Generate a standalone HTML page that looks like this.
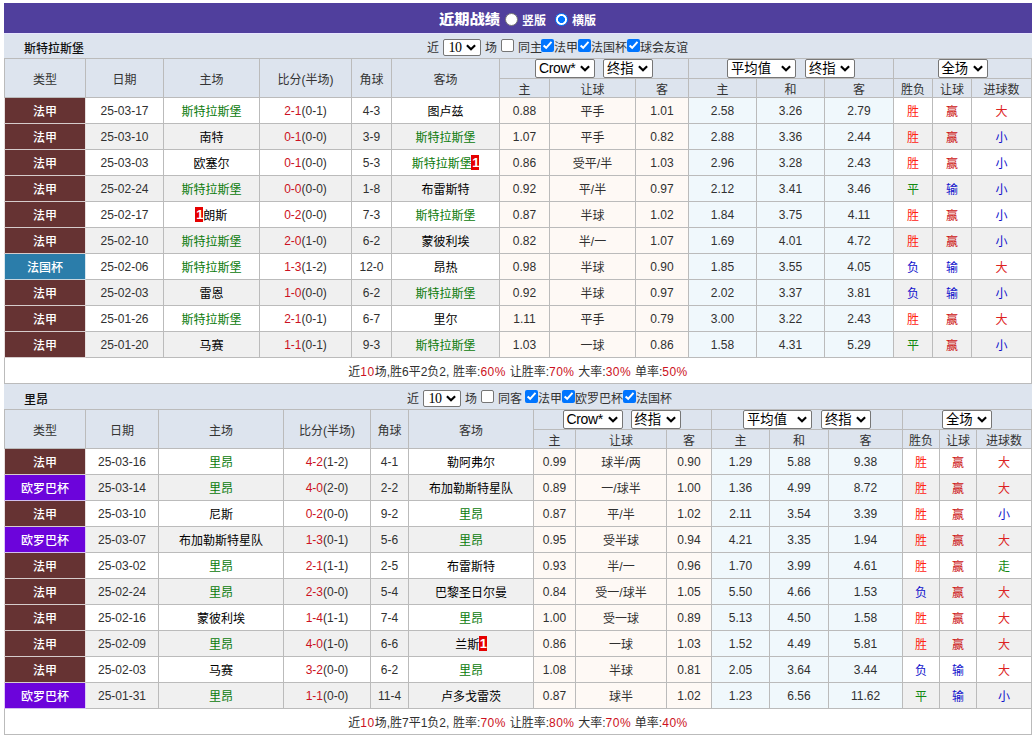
<!DOCTYPE html>
<html lang="zh-CN">
<head>
<meta charset="utf-8">
<title>近期战绩</title>
<style>
html,body{margin:0;padding:0;background:#fff;}
body{font-family:"Liberation Sans","Noto Sans CJK SC",sans-serif;font-size:12px;color:#303030;}
#wrap{position:absolute;left:4px;top:3px;width:1028px;}
.title{height:30px;background:#503F9D;color:#fff;position:relative;}
.title>*{position:absolute;}
.tt{left:435px;top:6px;font-size:14px;line-height:20px;font-weight:900;transform-origin:0 50%;transform:scaleX(1.09);}
.rd{box-sizing:border-box;width:13px;height:13px;top:10px;border-radius:50%;background:#fff;border:1px solid #767676;}
.rd.on{border:1px solid #0075FF;background:radial-gradient(circle at center,#0075FF 0,#0075FF 3.2px,#fff 3.8px);}
.rl{top:10px;font-size:12px;line-height:16px;font-weight:700;}
.bar{height:24px;border-top:1px solid #E6E4FF;background:#DDE4EE;position:relative;}
.bar.b2{border-top-color:#DDE4EE;}
.bar>*{position:absolute;}
.tn{left:20px;top:7px;line-height:16px;font-weight:500;color:#111;}
.bt{top:6px;line-height:16px;color:#333;}
.sel{display:inline-block;box-sizing:border-box;height:19px;border:1px solid #767676;border-radius:2px;background:#fff;position:relative;color:#000;vertical-align:top;font-weight:normal;text-align:left;}
.sel .st{position:absolute;left:3px;top:0;font-size:13.33px;line-height:17px;}
.sel .ar{position:absolute;right:4px;top:5px;}
.bar .sel{position:absolute;top:5px;height:17px;}
.bar .sel .st{font-family:"Liberation Serif","Noto Sans CJK SC",serif;font-size:14px;line-height:15px;left:4.5px;letter-spacing:-0.6px;}
.bar .sel .ar{top:4px;}
.cb{box-sizing:border-box;width:13px;height:13px;top:5px;border:1px solid #767676;border-radius:2px;background:#fff;}
.cb.on{border:none;background:#0075FF;}
.cb svg{display:block}
table.t{border-collapse:collapse;table-layout:fixed;width:1028px;}
table.t th,table.t td{border:1px solid #BBB;padding:0;text-align:center;font-weight:normal;overflow:hidden;white-space:nowrap;}
thead th{background:#DDE4EE;color:#333;}
tr.h1 th{height:19px;}
tr.h1 th.sc3{font-size:0;line-height:0;vertical-align:top;}
tr.h2 th{height:18px;}
tbody td{height:25px;background:#fff;}
tr.alt td{background:#F0F0F0;}
table.t td.ty{color:#fff;font-weight:500;border-left-color:#E6DEDE;border-right-color:#E6DEDE;border-bottom-color:#D6CCCC;}
table.t td.ty.tb{border-left-color:#D8E6EE;border-right-color:#D8E6EE;border-bottom-color:#C8D6DE;}
table.t td.ty.tp{border-left-color:#DFC8F8;border-right-color:#DFC8F8;border-bottom-color:#D2BEEE;}
td.oa,tr.alt td.oa{background:#FEF9F5;}
td.ob,tr.alt td.ob{background:#F0F8FC;}
.me{color:#0A7A0A;}
.nm{color:#000;}
.sc{color:#CC1122;}
.rc{background:#E60000;color:#fff;font-weight:bold;font-size:13px;position:relative;top:-1px;padding-left:1px;margin-left:-0.5px;}
.r1{color:#F21}.r2{color:#C11}.r3{color:#D22}.g1{color:#181}.b1{color:#11C}
tr.ft td{background:#fff;height:25px;word-spacing:0.4px;}
tr.ft i{font-style:normal;color:#CC1122;letter-spacing:0.5px;}
.gap{display:inline-block;width:8px}.gap2{display:inline-block;width:9px}

table.t2 tr.h1 th.sc3:nth-child(7){padding-right:2px;}
.sel .lat{font-size:14px;letter-spacing:-0.35px;}

</style>
</head>
<body>
<div id="wrap">
<div class="title"><b class="tt">近期战绩</b><span class="rd" style="left:501px"></span><span class="rl" style="left:518px">竖版</span><span class="rd on" style="left:551px"></span><span class="rl" style="left:568px">横版</span></div>
<div class="bar"><span class="tn">斯特拉斯堡</span><span class="bt" style="left:423px">近</span><span class="sel s10" style="width:38px;left:439px"><span class="st">10</span><svg class="ar" viewBox="0 0 10 7" width="10" height="7"><path d="M0.9 1.3 L5 5.2 L9.1 1.3" fill="none" stroke="#000" stroke-width="2.2" stroke-linecap="butt" stroke-linejoin="miter"/></svg></span><span class="bt" style="left:481px">场</span><span class="cb" style="left:497px"></span><span class="bt" style="left:514px">同主</span><span class="cb on" style="left:537px"><svg viewBox="0 0 13 13" width="13" height="13"><path d="M2.6 6.4 L5.2 8.8 L10.5 2.9" fill="none" stroke="#fff" stroke-width="2" stroke-linecap="butt" stroke-linejoin="miter"/></svg></span><span class="bt" style="left:550px">法甲</span><span class="cb on" style="left:574px"><svg viewBox="0 0 13 13" width="13" height="13"><path d="M2.6 6.4 L5.2 8.8 L10.5 2.9" fill="none" stroke="#fff" stroke-width="2" stroke-linecap="butt" stroke-linejoin="miter"/></svg></span><span class="bt" style="left:587px">法国杯</span><span class="cb on" style="left:623px"><svg viewBox="0 0 13 13" width="13" height="13"><path d="M2.6 6.4 L5.2 8.8 L10.5 2.9" fill="none" stroke="#fff" stroke-width="2" stroke-linecap="butt" stroke-linejoin="miter"/></svg></span><span class="bt" style="left:636px">球会友谊</span></div>
<table class="t t1"><colgroup><col style="width:81px"><col style="width:78px"><col style="width:96px"><col style="width:92px"><col style="width:40px"><col style="width:108px"><col style="width:50px"><col style="width:86px"><col style="width:53px"><col style="width:68px"><col style="width:68px"><col style="width:69px"><col style="width:39px"><col style="width:39px"><col style="width:60px"></colgroup>
<thead><tr class="h1"><th rowspan="2">类型</th><th rowspan="2">日期</th><th rowspan="2">主场</th><th rowspan="2">比分(半场)</th><th rowspan="2">角球</th><th rowspan="2">客场</th><th colspan="3" class="sc3"><span class="sel " style="width:60px;"><span class="st"><span class="lat">Crow*</span></span><svg class="ar" viewBox="0 0 10 7" width="10" height="7"><path d="M0.9 1.3 L5 5.2 L9.1 1.3" fill="none" stroke="#000" stroke-width="2.2" stroke-linecap="butt" stroke-linejoin="miter"/></svg></span><span class="gap"></span><span class="sel " style="width:50px;"><span class="st">终指</span><svg class="ar" viewBox="0 0 10 7" width="10" height="7"><path d="M0.9 1.3 L5 5.2 L9.1 1.3" fill="none" stroke="#000" stroke-width="2.2" stroke-linecap="butt" stroke-linejoin="miter"/></svg></span></th><th colspan="3" class="sc3"><span class="sel wide" style="width:69px;"><span class="st">平均值</span><svg class="ar" viewBox="0 0 10 7" width="10" height="7"><path d="M0.9 1.3 L5 5.2 L9.1 1.3" fill="none" stroke="#000" stroke-width="2.2" stroke-linecap="butt" stroke-linejoin="miter"/></svg></span><span class="gap2"></span><span class="sel " style="width:50px;"><span class="st">终指</span><svg class="ar" viewBox="0 0 10 7" width="10" height="7"><path d="M0.9 1.3 L5 5.2 L9.1 1.3" fill="none" stroke="#000" stroke-width="2.2" stroke-linecap="butt" stroke-linejoin="miter"/></svg></span></th><th colspan="3" class="sc3"><span class="sel " style="width:50px;"><span class="st">全场</span><svg class="ar" viewBox="0 0 10 7" width="10" height="7"><path d="M0.9 1.3 L5 5.2 L9.1 1.3" fill="none" stroke="#000" stroke-width="2.2" stroke-linecap="butt" stroke-linejoin="miter"/></svg></span></th></tr><tr class="h2"><th>主</th><th>让球</th><th>客</th><th>主</th><th>和</th><th>客</th><th>胜负</th><th>让球</th><th>进球数</th></tr></thead>
<tbody>
<tr><td class="ty" style="background:#663333">法甲</td><td>25-03-17</td><td><span class="me">斯特拉斯堡</span></td><td><span class="sc">2-1</span>(0-1)</td><td>4-3</td><td><span class="nm">图卢兹</span></td><td class="oa">0.88</td><td class="oa">平手</td><td class="oa">1.01</td><td class="ob">2.58</td><td class="ob">3.26</td><td class="ob">2.79</td><td class="r1">胜</td><td class="r2">赢</td><td class="r3">大</td></tr>
<tr class="alt"><td class="ty" style="background:#663333">法甲</td><td>25-03-10</td><td><span class="nm">南特</span></td><td><span class="sc">0-1</span>(0-0)</td><td>3-9</td><td><span class="me">斯特拉斯堡</span></td><td class="oa">1.07</td><td class="oa">平手</td><td class="oa">0.82</td><td class="ob">2.88</td><td class="ob">3.36</td><td class="ob">2.44</td><td class="r1">胜</td><td class="r2">赢</td><td class="b1">小</td></tr>
<tr><td class="ty" style="background:#663333">法甲</td><td>25-03-03</td><td><span class="nm">欧塞尔</span></td><td><span class="sc">0-1</span>(0-0)</td><td>5-3</td><td><span class="me">斯特拉斯堡</span><span class="rc">1</span></td><td class="oa">0.86</td><td class="oa">受平/半</td><td class="oa">1.03</td><td class="ob">2.96</td><td class="ob">3.28</td><td class="ob">2.43</td><td class="r1">胜</td><td class="r2">赢</td><td class="b1">小</td></tr>
<tr class="alt"><td class="ty" style="background:#663333">法甲</td><td>25-02-24</td><td><span class="me">斯特拉斯堡</span></td><td><span class="sc">0-0</span>(0-0)</td><td>1-8</td><td><span class="nm">布雷斯特</span></td><td class="oa">0.92</td><td class="oa">平/半</td><td class="oa">0.97</td><td class="ob">2.12</td><td class="ob">3.41</td><td class="ob">3.46</td><td class="g1">平</td><td class="b1">输</td><td class="b1">小</td></tr>
<tr><td class="ty" style="background:#663333">法甲</td><td>25-02-17</td><td><span class="rc">1</span><span class="nm">朗斯</span></td><td><span class="sc">0-2</span>(0-0)</td><td>7-3</td><td><span class="me">斯特拉斯堡</span></td><td class="oa">0.87</td><td class="oa">半球</td><td class="oa">1.02</td><td class="ob">1.84</td><td class="ob">3.75</td><td class="ob">4.11</td><td class="r1">胜</td><td class="r2">赢</td><td class="b1">小</td></tr>
<tr class="alt"><td class="ty" style="background:#663333">法甲</td><td>25-02-10</td><td><span class="me">斯特拉斯堡</span></td><td><span class="sc">2-0</span>(1-0)</td><td>6-2</td><td><span class="nm">蒙彼利埃</span></td><td class="oa">0.82</td><td class="oa">半/一</td><td class="oa">1.07</td><td class="ob">1.69</td><td class="ob">4.01</td><td class="ob">4.72</td><td class="r1">胜</td><td class="r2">赢</td><td class="b1">小</td></tr>
<tr><td class="ty tb" style="background:#2B7DAA">法国杯</td><td>25-02-06</td><td><span class="me">斯特拉斯堡</span></td><td><span class="sc">1-3</span>(1-2)</td><td>12-0</td><td><span class="nm">昂热</span></td><td class="oa">0.98</td><td class="oa">半球</td><td class="oa">0.90</td><td class="ob">1.85</td><td class="ob">3.55</td><td class="ob">4.05</td><td class="b1">负</td><td class="b1">输</td><td class="r3">大</td></tr>
<tr class="alt"><td class="ty" style="background:#663333">法甲</td><td>25-02-03</td><td><span class="nm">雷恩</span></td><td><span class="sc">1-0</span>(0-0)</td><td>6-2</td><td><span class="me">斯特拉斯堡</span></td><td class="oa">0.92</td><td class="oa">半球</td><td class="oa">0.97</td><td class="ob">2.02</td><td class="ob">3.37</td><td class="ob">3.81</td><td class="b1">负</td><td class="b1">输</td><td class="b1">小</td></tr>
<tr><td class="ty" style="background:#663333">法甲</td><td>25-01-26</td><td><span class="me">斯特拉斯堡</span></td><td><span class="sc">2-1</span>(0-1)</td><td>6-7</td><td><span class="nm">里尔</span></td><td class="oa">1.11</td><td class="oa">平手</td><td class="oa">0.79</td><td class="ob">3.00</td><td class="ob">3.22</td><td class="ob">2.43</td><td class="r1">胜</td><td class="r2">赢</td><td class="r3">大</td></tr>
<tr class="alt"><td class="ty" style="background:#663333">法甲</td><td>25-01-20</td><td><span class="nm">马赛</span></td><td><span class="sc">1-1</span>(0-1)</td><td>9-3</td><td><span class="me">斯特拉斯堡</span></td><td class="oa">1.03</td><td class="oa">一球</td><td class="oa">0.86</td><td class="ob">1.58</td><td class="ob">4.31</td><td class="ob">5.29</td><td class="g1">平</td><td class="r2">赢</td><td class="b1">小</td></tr>
<tr class="ft"><td colspan="15">近<i>10</i>场,胜6平2负2, 胜率:<i>60%</i> 让胜率:<i>70%</i> 大率:<i>30%</i> 单率:<i>50%</i></td></tr>
</tbody></table>
<div class="bar b2"><span class="tn">里昂</span><span class="bt" style="left:403px">近</span><span class="sel s10" style="width:38px;left:419px"><span class="st">10</span><svg class="ar" viewBox="0 0 10 7" width="10" height="7"><path d="M0.9 1.3 L5 5.2 L9.1 1.3" fill="none" stroke="#000" stroke-width="2.2" stroke-linecap="butt" stroke-linejoin="miter"/></svg></span><span class="bt" style="left:461px">场</span><span class="cb" style="left:477px"></span><span class="bt" style="left:494px">同客</span><span class="cb on" style="left:521px"><svg viewBox="0 0 13 13" width="13" height="13"><path d="M2.6 6.4 L5.2 8.8 L10.5 2.9" fill="none" stroke="#fff" stroke-width="2" stroke-linecap="butt" stroke-linejoin="miter"/></svg></span><span class="bt" style="left:534px">法甲</span><span class="cb on" style="left:558px"><svg viewBox="0 0 13 13" width="13" height="13"><path d="M2.6 6.4 L5.2 8.8 L10.5 2.9" fill="none" stroke="#fff" stroke-width="2" stroke-linecap="butt" stroke-linejoin="miter"/></svg></span><span class="bt" style="left:571px">欧罗巴杯</span><span class="cb on" style="left:619px"><svg viewBox="0 0 13 13" width="13" height="13"><path d="M2.6 6.4 L5.2 8.8 L10.5 2.9" fill="none" stroke="#fff" stroke-width="2" stroke-linecap="butt" stroke-linejoin="miter"/></svg></span><span class="bt" style="left:632px">法国杯</span></div>
<table class="t t2"><colgroup><col style="width:81px"><col style="width:73px"><col style="width:125px"><col style="width:87px"><col style="width:38px"><col style="width:125px"><col style="width:42px"><col style="width:91px"><col style="width:45px"><col style="width:58px"><col style="width:59px"><col style="width:74px"><col style="width:37px"><col style="width:37px"><col style="width:55px"></colgroup>
<thead><tr class="h1"><th rowspan="2">类型</th><th rowspan="2">日期</th><th rowspan="2">主场</th><th rowspan="2">比分(半场)</th><th rowspan="2">角球</th><th rowspan="2">客场</th><th colspan="3" class="sc3"><span class="sel " style="width:60px;"><span class="st"><span class="lat">Crow*</span></span><svg class="ar" viewBox="0 0 10 7" width="10" height="7"><path d="M0.9 1.3 L5 5.2 L9.1 1.3" fill="none" stroke="#000" stroke-width="2.2" stroke-linecap="butt" stroke-linejoin="miter"/></svg></span><span class="gap"></span><span class="sel " style="width:50px;"><span class="st">终指</span><svg class="ar" viewBox="0 0 10 7" width="10" height="7"><path d="M0.9 1.3 L5 5.2 L9.1 1.3" fill="none" stroke="#000" stroke-width="2.2" stroke-linecap="butt" stroke-linejoin="miter"/></svg></span></th><th colspan="3" class="sc3"><span class="sel wide" style="width:69px;"><span class="st">平均值</span><svg class="ar" viewBox="0 0 10 7" width="10" height="7"><path d="M0.9 1.3 L5 5.2 L9.1 1.3" fill="none" stroke="#000" stroke-width="2.2" stroke-linecap="butt" stroke-linejoin="miter"/></svg></span><span class="gap2"></span><span class="sel " style="width:50px;"><span class="st">终指</span><svg class="ar" viewBox="0 0 10 7" width="10" height="7"><path d="M0.9 1.3 L5 5.2 L9.1 1.3" fill="none" stroke="#000" stroke-width="2.2" stroke-linecap="butt" stroke-linejoin="miter"/></svg></span></th><th colspan="3" class="sc3"><span class="sel " style="width:50px;"><span class="st">全场</span><svg class="ar" viewBox="0 0 10 7" width="10" height="7"><path d="M0.9 1.3 L5 5.2 L9.1 1.3" fill="none" stroke="#000" stroke-width="2.2" stroke-linecap="butt" stroke-linejoin="miter"/></svg></span></th></tr><tr class="h2"><th>主</th><th>让球</th><th>客</th><th>主</th><th>和</th><th>客</th><th>胜负</th><th>让球</th><th>进球数</th></tr></thead>
<tbody>
<tr><td class="ty" style="background:#663333">法甲</td><td>25-03-16</td><td><span class="me">里昂</span></td><td><span class="sc">4-2</span>(1-2)</td><td>4-1</td><td><span class="nm">勒阿弗尔</span></td><td class="oa">0.99</td><td class="oa">球半/两</td><td class="oa">0.90</td><td class="ob">1.29</td><td class="ob">5.88</td><td class="ob">9.38</td><td class="r1">胜</td><td class="r2">赢</td><td class="r3">大</td></tr>
<tr class="alt"><td class="ty tp" style="background:#6C04DB">欧罗巴杯</td><td>25-03-14</td><td><span class="me">里昂</span></td><td><span class="sc">4-0</span>(2-0)</td><td>2-2</td><td><span class="nm">布加勒斯特星队</span></td><td class="oa">0.89</td><td class="oa">一/球半</td><td class="oa">1.00</td><td class="ob">1.36</td><td class="ob">4.99</td><td class="ob">8.72</td><td class="r1">胜</td><td class="r2">赢</td><td class="r3">大</td></tr>
<tr><td class="ty" style="background:#663333">法甲</td><td>25-03-10</td><td><span class="nm">尼斯</span></td><td><span class="sc">0-2</span>(0-0)</td><td>9-2</td><td><span class="me">里昂</span></td><td class="oa">0.87</td><td class="oa">平/半</td><td class="oa">1.02</td><td class="ob">2.11</td><td class="ob">3.54</td><td class="ob">3.39</td><td class="r1">胜</td><td class="r2">赢</td><td class="b1">小</td></tr>
<tr class="alt"><td class="ty tp" style="background:#6C04DB">欧罗巴杯</td><td>25-03-07</td><td><span class="nm">布加勒斯特星队</span></td><td><span class="sc">1-3</span>(0-1)</td><td>5-6</td><td><span class="me">里昂</span></td><td class="oa">0.95</td><td class="oa">受半球</td><td class="oa">0.94</td><td class="ob">4.21</td><td class="ob">3.35</td><td class="ob">1.94</td><td class="r1">胜</td><td class="r2">赢</td><td class="r3">大</td></tr>
<tr><td class="ty" style="background:#663333">法甲</td><td>25-03-02</td><td><span class="me">里昂</span></td><td><span class="sc">2-1</span>(1-1)</td><td>2-5</td><td><span class="nm">布雷斯特</span></td><td class="oa">0.93</td><td class="oa">半/一</td><td class="oa">0.96</td><td class="ob">1.70</td><td class="ob">3.99</td><td class="ob">4.61</td><td class="r1">胜</td><td class="r2">赢</td><td class="g1">走</td></tr>
<tr class="alt"><td class="ty" style="background:#663333">法甲</td><td>25-02-24</td><td><span class="me">里昂</span></td><td><span class="sc">2-3</span>(0-0)</td><td>5-4</td><td><span class="nm">巴黎圣日尔曼</span></td><td class="oa">0.84</td><td class="oa">受一/球半</td><td class="oa">1.05</td><td class="ob">5.50</td><td class="ob">4.66</td><td class="ob">1.53</td><td class="b1">负</td><td class="r2">赢</td><td class="r3">大</td></tr>
<tr><td class="ty" style="background:#663333">法甲</td><td>25-02-16</td><td><span class="nm">蒙彼利埃</span></td><td><span class="sc">1-4</span>(1-1)</td><td>7-4</td><td><span class="me">里昂</span></td><td class="oa">1.00</td><td class="oa">受一球</td><td class="oa">0.89</td><td class="ob">5.13</td><td class="ob">4.50</td><td class="ob">1.58</td><td class="r1">胜</td><td class="r2">赢</td><td class="r3">大</td></tr>
<tr class="alt"><td class="ty" style="background:#663333">法甲</td><td>25-02-09</td><td><span class="me">里昂</span></td><td><span class="sc">4-0</span>(1-0)</td><td>6-6</td><td><span class="nm">兰斯</span><span class="rc">1</span></td><td class="oa">0.86</td><td class="oa">一球</td><td class="oa">1.03</td><td class="ob">1.52</td><td class="ob">4.49</td><td class="ob">5.81</td><td class="r1">胜</td><td class="r2">赢</td><td class="r3">大</td></tr>
<tr><td class="ty" style="background:#663333">法甲</td><td>25-02-03</td><td><span class="nm">马赛</span></td><td><span class="sc">3-2</span>(0-0)</td><td>6-2</td><td><span class="me">里昂</span></td><td class="oa">1.08</td><td class="oa">半球</td><td class="oa">0.81</td><td class="ob">2.05</td><td class="ob">3.64</td><td class="ob">3.44</td><td class="b1">负</td><td class="b1">输</td><td class="r3">大</td></tr>
<tr class="alt"><td class="ty tp" style="background:#6C04DB">欧罗巴杯</td><td>25-01-31</td><td><span class="me">里昂</span></td><td><span class="sc">1-1</span>(0-0)</td><td>11-4</td><td><span class="nm">卢多戈雷茨</span></td><td class="oa">0.87</td><td class="oa">球半</td><td class="oa">1.02</td><td class="ob">1.23</td><td class="ob">6.56</td><td class="ob">11.62</td><td class="g1">平</td><td class="b1">输</td><td class="b1">小</td></tr>
<tr class="ft"><td colspan="15">近<i>10</i>场,胜7平1负2, 胜率:<i>70%</i> 让胜率:<i>80%</i> 大率:<i>70%</i> 单率:<i>40%</i></td></tr>
</tbody></table>
</div>
</body>
</html>
